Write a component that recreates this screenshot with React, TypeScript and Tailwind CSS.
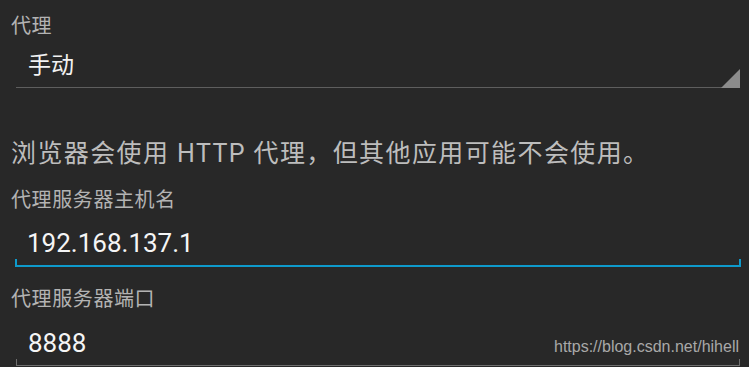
import React from "react";

const font = { fontFamily: 'Roboto, "Noto Sans CJK SC", sans-serif' };

function Label({ children, className = "" }: { children: React.ReactNode; className?: string }) {
  return (
    <div className={`text-[20px] leading-[20px] tracking-[0.6px] text-[#b3b3b3] ${className}`}>
      {children}
    </div>
  );
}

// android holo style edit text: value + underline with small end ticks
function EditField({ value, focused }: { value: string; focused?: boolean }) {
  return (
    <div className={focused ? "ml-[4px]" : "ml-[5px] mr-[1px]"}>
      <div className="pl-[12px] text-[26px] leading-[26px] text-[#f5f5f5]">{value}</div>
      <div
        className={
          focused
            ? "mt-[3px] h-[8px] border-x-2 border-b-2 border-[#0e9acb]"
            : "mt-[3px] h-[7px] border-x border-b border-[#6e6e6e]"
        }
      />
    </div>
  );
}

export default function App() {
  return (
    <div
      className="relative flex h-[367px] w-[749px] flex-col overflow-hidden bg-[#282828] pl-[11px] pr-[8px] pt-[16px]"
      style={font}
    >
      <Label>代理</Label>

      {/* spinner */}
      <div className="ml-[5px] mr-[1px] mt-[18px] flex items-end justify-between border-b border-[#5e5e5e]">
        <div className="pb-[10px] pl-[12px] text-[23px] leading-[23px] text-[#f2f2f2]">手动</div>
        <svg className="-mb-px" width="19" height="19" viewBox="0 0 19 19">
          <polygon points="19,0 19,19 0,19" fill="#8c8c8c" />
        </svg>
      </div>

      <div className="mt-[54px] text-[25px] leading-[24px] tracking-[1.4px] text-[#bdbdbd]">
        浏览器会使用 HTTP 代理，但其他应用可能不会使用。
      </div>

      <Label className="mt-[24px]">代理服务器主机名</Label>
      <div className="mt-[20px]">
        <EditField value="192.168.137.1" focused />
      </div>

      <Label className="mt-[22px]">代理服务器端口</Label>
      <div className="mt-[21px]">
        <EditField value="8888" />
      </div>

      <div
        className="absolute right-[10px] top-[338px] text-[16px] leading-[18px] text-[#a8a8a8]"
        style={{ fontFamily: '"Liberation Sans", Arial, sans-serif' }}
      >
        https://blog.csdn.net/hihell
      </div>
    </div>
  );
}
